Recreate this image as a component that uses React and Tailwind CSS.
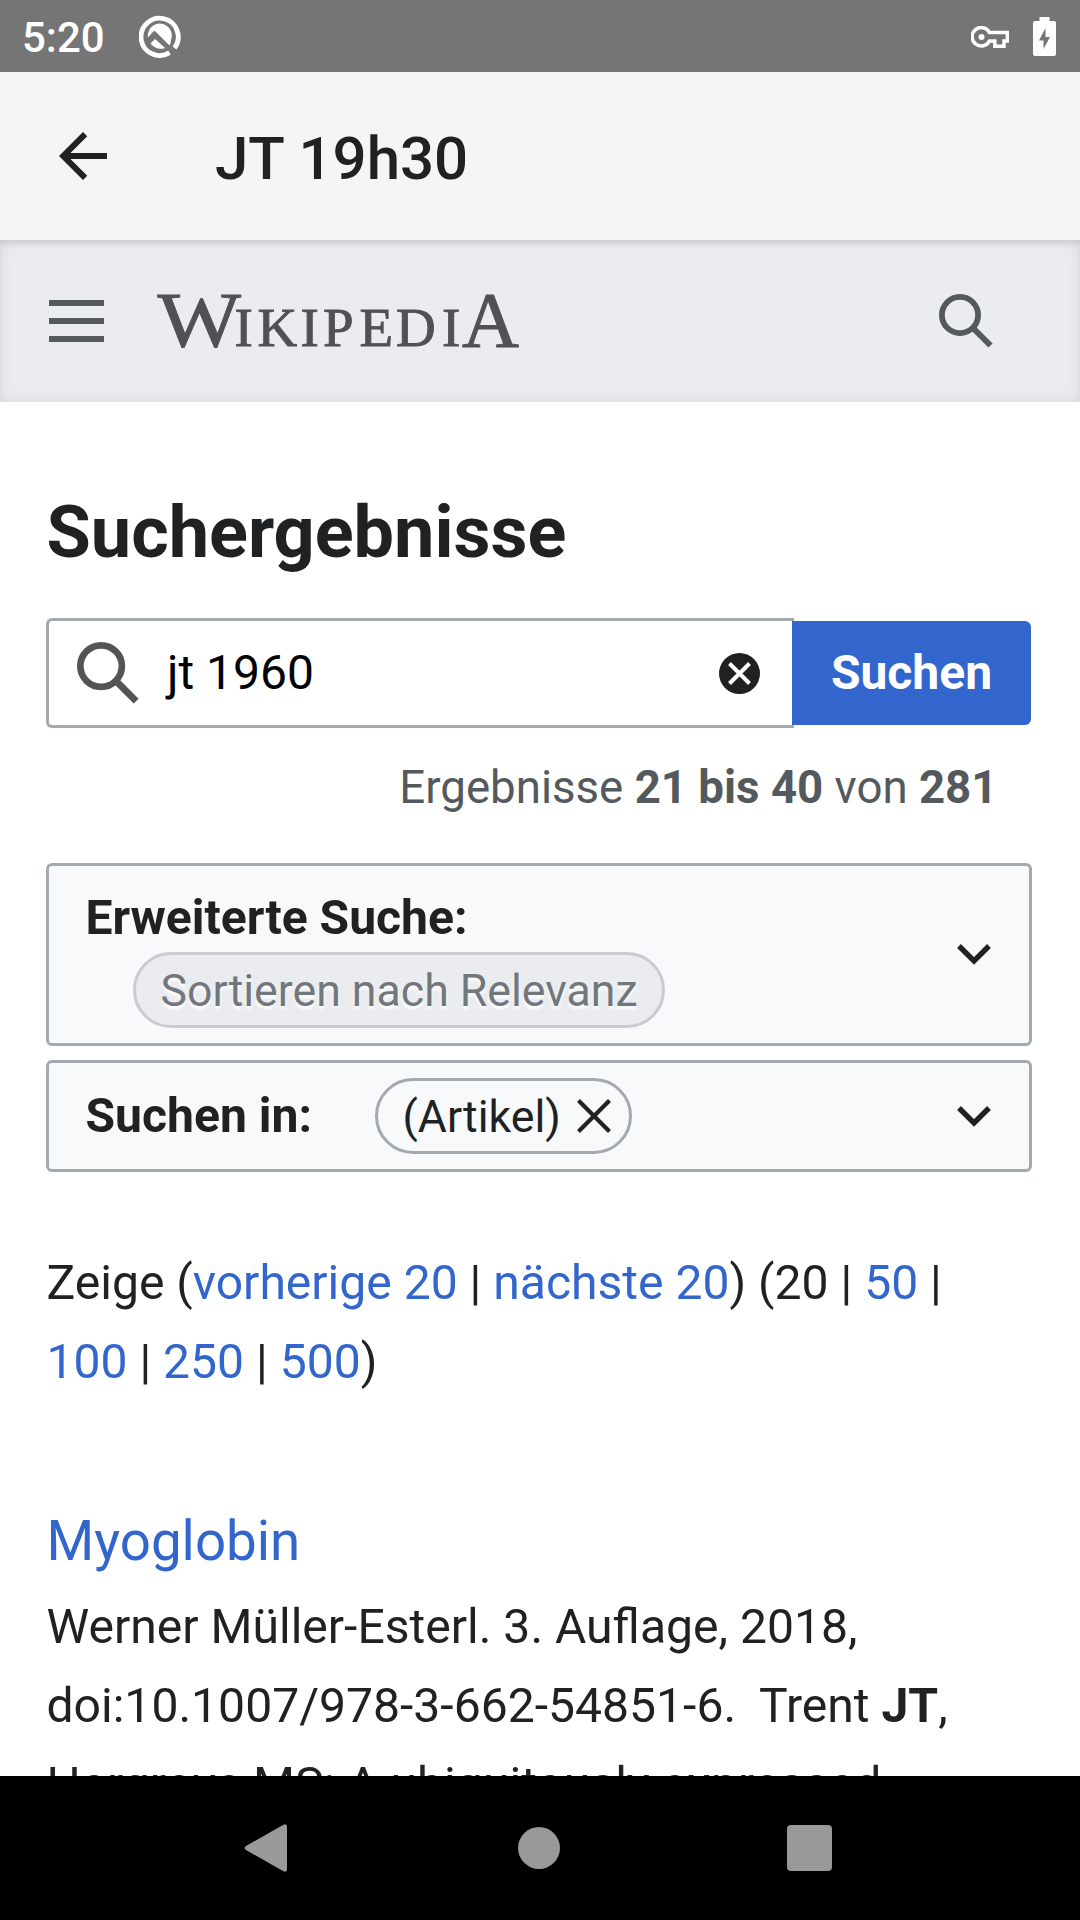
const Link = ({ children }) => <a className="text-[#3366cc]">{children}</a>;

function StatusBar() {
  return (
    <div className="flex h-[72px] shrink-0 items-center bg-[#757575] pr-6 pl-[22px] text-white">
      <span className="w-[117px] pt-[3px] text-[42px] leading-[72px] font-medium">5:20</span>
      <svg className="h-[43px] w-[42px]" viewBox="0 0 42 43" fill="none">
        <path d="M30.500 37.600A18.600 18.600 0 1 1 35.500 33" stroke="white" strokeWidth="4.800" />
        <path d="M9 22.500A12 12 0 1 1 32 25Q32 28 30.500 30.500L16.500 16.500Q15.300 15.500 14 16.800Z" fill="white" />
        <path d="M11.500 28.500L16 24L26 33Q18 36 11.500 28.500Z" fill="white" />
      </svg>
      <div className="ml-auto flex items-center gap-[24px]">
        <svg className="mt-[2px] h-[22px] w-[38px]" viewBox="0 0 38 22" fill="none">
          <path d="M18.500 6.600H36.300V14.900H33V20.200H23.800V14.900H18.500A9.200 9.200 0 1 1 18.500 6.600Z" stroke="white" strokeWidth="3.500" />
          <circle cx="10.500" cy="11" r="3" fill="white" />
        </svg>
        <svg className="h-[39px] w-[23px]" viewBox="0 0 23 39">
          <path fill="white" fillRule="evenodd" d="M6.500 0H16.500V4H21Q23 4 23 6V37Q23 39 21 39H2Q0 39 0 37V6Q0 4 2 4H6.500ZM12.500 11L6 23.500H10.500V32L17 20H12.500Z" />
        </svg>
      </div>
    </div>
  );
}

function AppBar() {
  return (
    <div className="flex h-[168px] shrink-0 items-center bg-[#f5f5f5] pl-[46.500px] text-[#212121]">
      <svg className="h-[72px] w-[72px]" viewBox="0 0 24 24" fill="currentColor">
        <path d="M20 11H7.830l5.590-5.590L12 4l-8 8 8 8 1.410-1.410L7.830 13H20v-2z" />
      </svg>
      <h1 className="ml-[96.500px] pt-[6px] text-[60px] leading-[72px] font-medium">JT 19h30</h1>
    </div>
  );
}

function SearchIcon({ className }) {
  return (
    <svg className={className} viewBox="0 0 54 54" fill="none" stroke="currentColor">
      <circle cx="21" cy="21" r="18.100" strokeWidth="5.800" />
      <path d="M34 34L51.500 51.500" strokeWidth="6" />
    </svg>
  );
}

function Wordmark() {
  return (
    <svg className="ml-[52px] h-[90px] w-[370px]" viewBox="0 -15 370 90" fill="#505154" stroke="#505154" strokeWidth="0.9" fontFamily="Liberation Serif, serif">
      <text y="55">
        <tspan x="1.500" fontSize="79" textLength="83.500" lengthAdjust="spacingAndGlyphs">W</tspan>
        <tspan x="78.500 101.500 144.500 167 203.500 240 286" fontSize="55">IKIPEDI</tspan>
        <tspan x="306" fontSize="79">A</tspan>
      </text>
    </svg>
  );
}

function SiteHeader() {
  return (
    <div className="flex h-[162px] shrink-0 items-center bg-[#eaecf0] pr-[87px] pl-[49px] text-[#54595d] shadow-[inset_0_0_16px_rgba(0,0,0,0.08),inset_0_5px_6px_-2px_rgba(0,0,0,0.1)]">
      <div className="flex w-[55px] flex-col gap-3">
        <span className="h-[6px] bg-[#54595d]" />
        <span className="h-[6px] bg-[#54595d]" />
        <span className="h-[6px] bg-[#54595d]" />
      </div>
      <Wordmark />
      <SearchIcon className="ml-auto h-[54px] w-[54px]" />
    </div>
  );
}

function Chevron() {
  return (
    <svg className="ml-auto h-[21px] w-[34px] shrink-0" viewBox="0 0 34 21" fill="none">
      <path d="M2 2L17 17L32 2" stroke="#202122" strokeWidth="5.400" />
    </svg>
  );
}

function SearchForm() {
  return (
    <div className="mt-[43px] flex h-[110px] items-center">
      <div className="flex h-[110px] w-[748px] items-center rounded-l-[6px] border-[3px] border-r-0 border-[#a2a9b1] pr-[34px] pl-[28px] text-black">
        <SearchIcon className="h-[62px] w-[62px] text-[#545454]" />
        <span className="ml-[28px] text-[48px] leading-[60px]">jt 1960</span>
        <svg className="ml-auto h-[41px] w-[41px]" viewBox="0 0 41 41">
          <circle cx="20.500" cy="20.500" r="20.500" fill="#202122" />
          <path d="M10.500 10.500L30.500 30.500M30.500 10.500L10.500 30.500" stroke="white" strokeWidth="4" />
        </svg>
      </div>
      <button className="-ml-[2px] h-[104px] w-[239px] rounded-r-[6px] bg-[#3366cc] text-[48px] leading-[60px] font-bold text-white">Suchen</button>
    </div>
  );
}

export default function App() {
  return (
    <div className="flex h-[1920px] w-[1080px] flex-col overflow-hidden bg-white font-[Roboto,sans-serif] text-[#202122]">
      <StatusBar />
      <AppBar />
      <SiteHeader />
      <main className="min-h-0 flex-1 overflow-hidden pr-[48px] pl-[46px] whitespace-nowrap">
        <h2 className="mt-[89px] pl-[0.500px] text-[72px] leading-[84px] font-bold">Suchergebnisse</h2>
        <SearchForm />
        <p className="mt-[28px] pr-[34.500px] text-right text-[45.650px] leading-[64px] text-[#54595d]">
          Ergebnisse <b>21 bis 40</b> von <b>281</b>
        </p>
        <section className="mt-[43px] flex h-[183px] items-center rounded-[6px] border-[3px] border-[#a2a9b1] bg-[#f8f9fb] pr-[38px] pl-[36.500px]">
          <div className="flex flex-col items-start">
            <h3 className="pt-[2px] text-[48.060px] leading-[68px] font-bold">Erweiterte Suche:</h3>
            <span className="ml-[47.500px] flex h-[76px] items-center rounded-full border-[3px] border-[#c8ccd1] bg-[#eaecf0] px-[24.500px] pt-[3px] text-[44.640px] text-[#72777d] [text-shadow:0_3px_3px_#fff]">
              Sortieren nach Relevanz
            </span>
          </div>
          <Chevron />
        </section>
        <section className="mt-[14px] flex h-[112px] items-center rounded-[6px] border-[3px] border-[#a2a9b1] bg-[#f8f9fb] pr-[38px] pl-[36.500px]">
          <h3 className="w-[289.500px] text-[48.060px] leading-[70px] font-bold">Suchen in:</h3>
          <span className="flex h-[76px] w-[257px] items-center justify-between rounded-full border-[3px] border-[#a2a9b1] pr-[18px] pl-[24.500px] text-[44.640px]">
            <span className="pt-[2px]">(Artikel)</span>
            <svg className="h-[34px] w-[34px]" viewBox="0 0 34 34">
              <path d="M1.500 1.500L32.500 32.500M32.500 1.500L1.500 32.500" stroke="#202122" strokeWidth="4.200" />
            </svg>
          </span>
          <Chevron />
        </section>
        <div className="pl-[0.500px]">
          <p className="mt-[71px] text-[48.060px] leading-[79px]">
            Zeige (<Link>vorherige 20</Link> | <Link>nächste 20</Link>) (20 | <Link>50</Link> |<br />
            <Link>100</Link> | <Link>250</Link> | <Link>500</Link>)
          </p>
          <h3 className="mt-[96px] text-[54.700px] leading-[88px]"><Link>Myoglobin</Link></h3>
          <p className="mt-[2px] text-[48.090px] leading-[79.200px]">
            Werner Müller-Esterl. 3. Auflage, 2018,<br />
            doi:10.1007/978-3-662-54851-6.&nbsp; Trent <b>JT</b>,<br />
            Hargrove MS: A ubiquitously expressed
          </p>
        </div>
      </main>
      <nav className="flex h-[144px] shrink-0 items-center justify-between bg-black pr-[248px] pl-[244px]">
        <svg className="h-[48px] w-[43px]" viewBox="0 0 43 48"><path d="M39 1Q43 -1 43 3V45Q43 49 39 47L2 26Q-1 24 2 22Z" fill="#999" /></svg>
        <span className="ml-[3px] h-[42px] w-[42px] rounded-full bg-[#999999]" />
        <span className="h-[46px] w-[45px] rounded-[4px] bg-[#999999]" />
      </nav>
    </div>
  );
}
